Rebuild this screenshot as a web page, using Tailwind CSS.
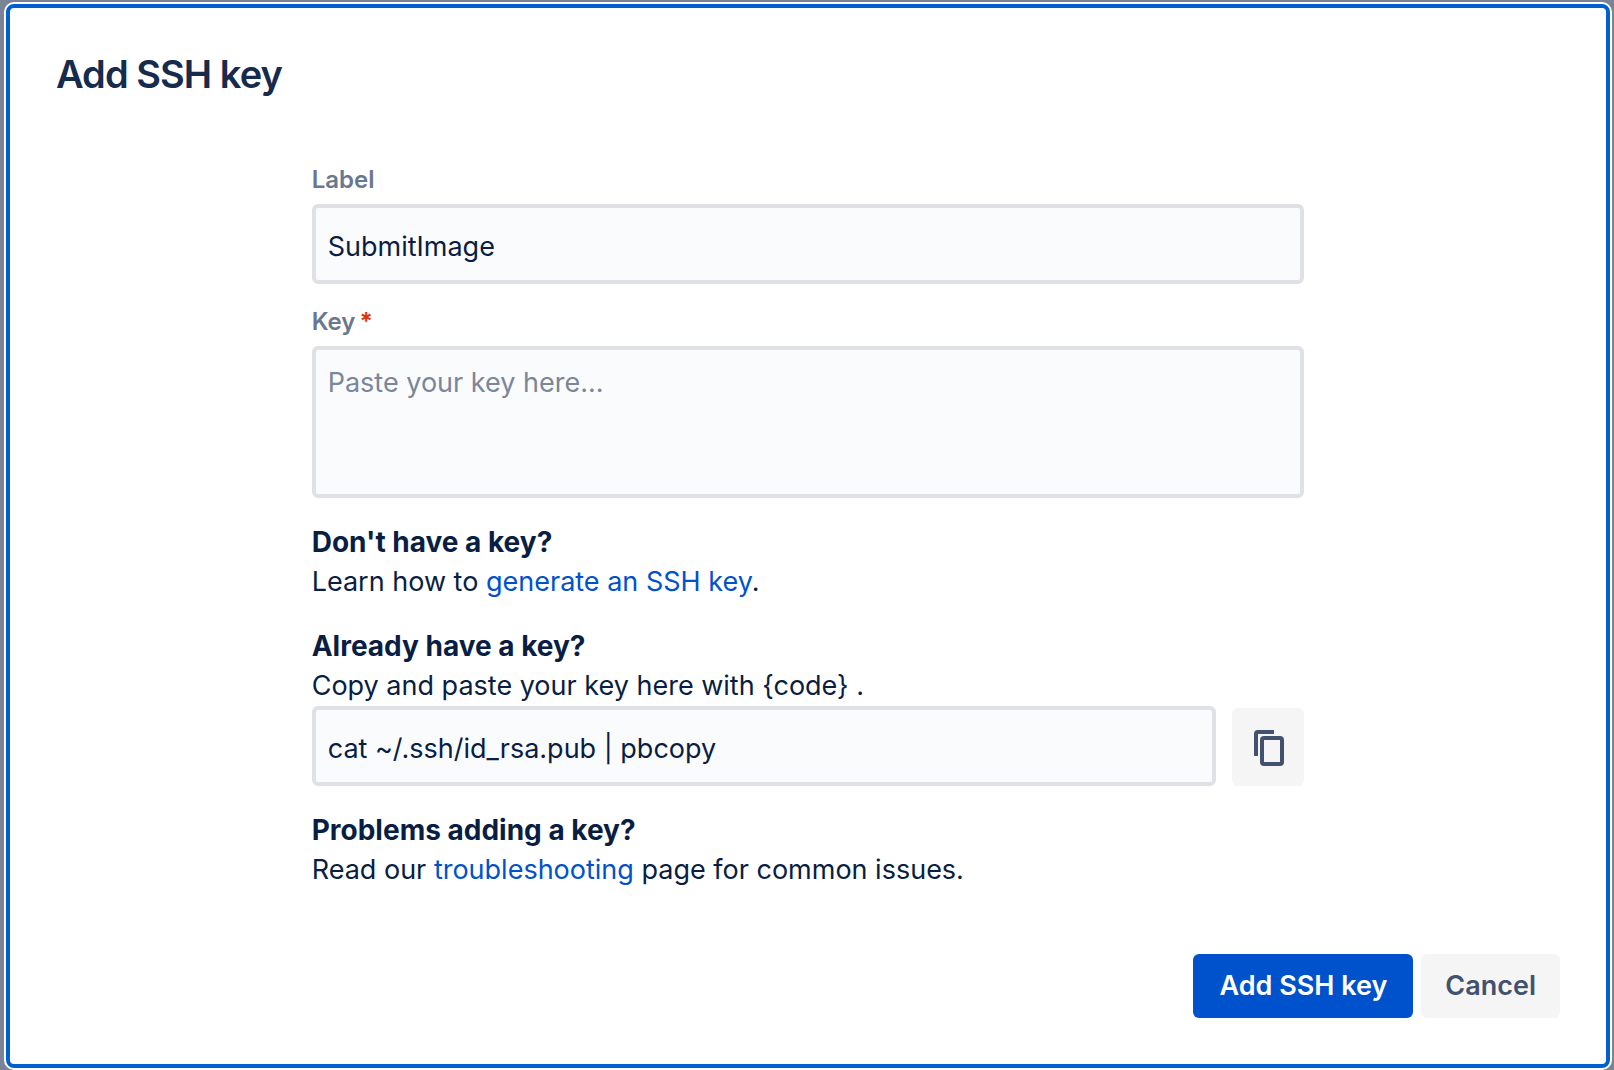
<!DOCTYPE html>
<html lang="en">
<head>
  <meta charset="UTF-8" />
  <meta name="viewport" content="width=device-width, initial-scale=1.0" />
  <title>Add SSH key</title>
  <script src="https://cdn.jsdelivr.net/npm/@tailwindcss/browser@4"></script>
</head>
<body class="bg-[#7a8496] font-['Inter',sans-serif] text-[#091e42]">

  <!-- Dialog -->
  <div role="dialog" aria-labelledby="dialogTitle" class="min-h-[calc(100vh-2px)] mt-0.5 ml-1 mr-0.5 p-0.5 bg-white rounded-[10px] flex flex-col">
    <form class="flex-1 flex flex-col border-4 border-[#0060d0] rounded-lg px-[46px] pb-[46px]" onsubmit="return false">
      <h1 id="dialogTitle" class="mt-[42px] text-[38px] leading-[48px] font-semibold tracking-tight text-[#172b4d]">Add SSH key</h1>

      <!-- Fields -->
      <div class="w-[66%] mx-auto mt-[66px] text-[27px] leading-10">
        <label for="keyLabel" class="block mb-2 text-[24px] leading-8 font-semibold text-[#6b778c]">Label</label>
        <input id="keyLabel" type="text" value="SubmitImage" class="block w-full h-20 px-3 pt-1 bg-[#fafbfc] border-4 border-[#dfe1e6] rounded-md outline-none" />

        <label for="keyText" class="block mt-[22px] mb-2 text-[24px] leading-8 font-semibold text-[#6b778c]">Key<span class="ml-1 font-bold text-[#de350b]">*</span></label>
        <textarea id="keyText" required placeholder="Paste your key here..." class="block w-full h-[152px] px-3 py-[13px] bg-[#fafbfc] border-4 border-[#dfe1e6] rounded-md outline-none resize-none placeholder:text-[#7a869a]"></textarea>

        <h2 class="mt-6 text-[28px] leading-10 font-bold">Don't have a key?</h2>
        <p>Learn how to <a href="#" class="text-[#0052cc]">generate an SSH key</a>.</p>

        <h2 class="mt-6 text-[28px] leading-10 font-bold">Already have a key?</h2>
        <p>Copy and paste your key here with {code} .</p>
        <div class="flex items-end gap-4">
          <input type="text" readonly aria-label="Copy command" value="cat ~/.ssh/id_rsa.pub | pbcopy" class="flex-1 min-w-0 h-20 px-3 pt-1 bg-[#fafbfc] border-4 border-[#dfe1e6] rounded-md outline-none" />
          <button type="button" aria-label="Copy" class="w-[72px] h-[78px] flex items-center justify-center bg-[#f5f5f5] rounded-md text-[#42526e]">
            <svg class="size-12" viewBox="0 0 48 48" fill="none" stroke="currentColor" stroke-width="4">
              <path d="M12 33V11a2 2 0 0 1 2-2h16" />
              <rect x="18" y="15" width="20" height="26" rx="2" />
            </svg>
          </button>
        </div>

        <h2 class="mt-6 text-[28px] leading-10 font-bold">Problems adding a key?</h2>
        <p>Read our <a href="#" class="text-[#0052cc]">troubleshooting</a> page for common issues.</p>
      </div>

      <!-- Actions -->
      <div class="mt-16 flex justify-end gap-2 text-[27px] leading-10 font-semibold">
        <button type="submit" class="h-16 px-[26px] bg-[#0052cc] text-white rounded-md">Add SSH key</button>
        <button type="button" class="h-16 px-6 bg-[#f5f5f5] text-[#42526e] rounded-md">Cancel</button>
      </div>
    </form>
  </div>

</body>
</html>
